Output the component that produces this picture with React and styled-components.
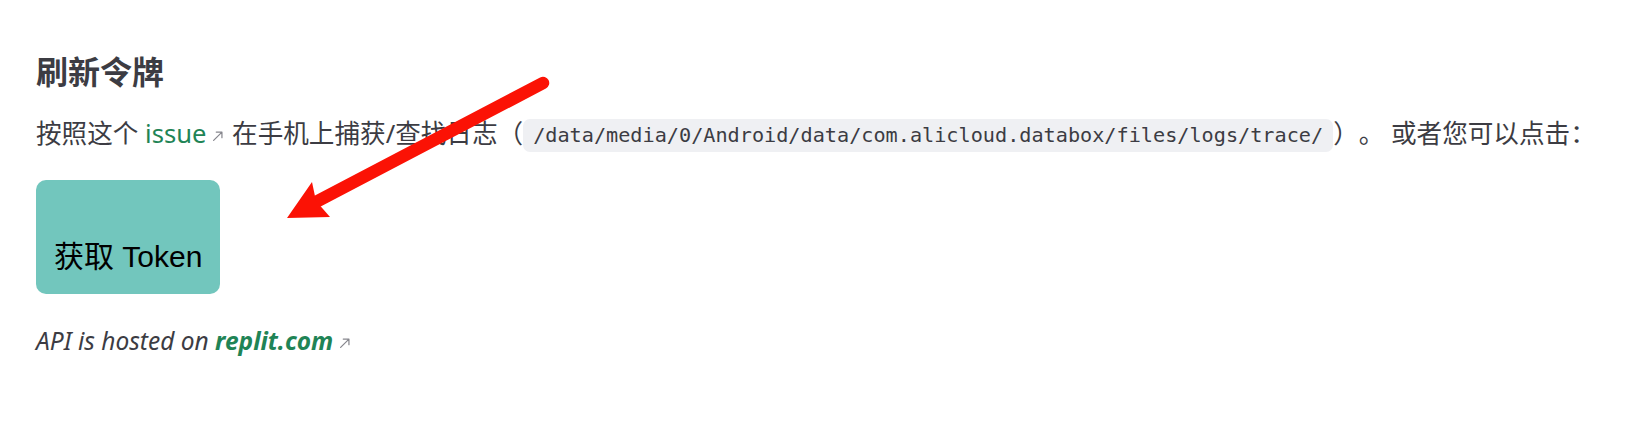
import React from "react";
import styled, { createGlobalStyle } from "styled-components";

const Global = createGlobalStyle`
  html, body {
    margin: 0;
    padding: 0;
    background: #ffffff;
  }
`;

const Page = styled.main`
  position: relative;
  box-sizing: border-box;
  min-height: 426px;
  padding: 52px 36px 0;
  font-family: "Noto Sans", "Noto Sans CJK SC", sans-serif;
  color: #3c3c43;
  text-spacing-trim: space-all;
`;

const Title = styled.h3`
  margin: 0;
  font-size: 32px;
  line-height: 40px;
  font-weight: 700;
  letter-spacing: 0;
`;

const Para = styled.p`
  margin: 20px 0 0;
  font-size: 25.6px;
  line-height: 44px;
  white-space: nowrap;
  text-spacing-trim: space-all;
`;

const InlineCode = styled.code`
  display: inline-block;
  font-family: "DejaVu Sans Mono", "Liberation Mono", monospace;
  font-size: 20.2px;
  line-height: 33px;
  padding: 0 10px;
  border-radius: 7px;
  background: #eff0f3;
  color: #3c3c43;
  vertical-align: 1px;
`;

const ExtLink = styled.a`
  color: #1f8456;
  text-decoration: none;
  font-weight: ${(p) => (p.$strong ? 700 : 400)};
  font-style: ${(p) => (p.$italic ? "italic" : "normal")};
`;

const ExtIcon = styled.svg`
  display: inline-block;
  width: ${(p) => p.$size}px;
  height: ${(p) => p.$size}px;
  margin-left: 5px;
  vertical-align: ${(p) => p.$shift}px;
  color: #86868d;
`;

const TokenButton = styled.button`
  display: flex;
  align-items: flex-end;
  box-sizing: border-box;
  margin-top: 24px;
  height: 114px;
  padding: 0 18px 20px;
  border: none;
  border-radius: 10px;
  background: #72c6bd;
  color: #000000;
  font-family: "Liberation Sans", "Noto Sans CJK SC", sans-serif;
  font-size: 30px;
  line-height: 34px;
  cursor: pointer;
`;

const Footnote = styled.p`
  margin: 29px 0 0;
  font-size: 24.5px;
  line-height: 36px;
  font-style: italic;
  color: #3c3c43;
`;

const Overlay = styled.svg`
  position: absolute;
  left: 0;
  top: 0;
  width: 1626px;
  height: 426px;
  pointer-events: none;
`;

function ArrowUpRight({ size = 16, shift = 0 }) {
  return (
    <ExtIcon $size={size} $shift={shift} viewBox="0 0 16 16" fill="none">
      <path
        d="M3 13 L12.5 3.5 M6 3.5 H12.5 V10"
        stroke="currentColor"
        strokeWidth="1.4"
        strokeLinecap="round"
        strokeLinejoin="round"
      />
    </ExtIcon>
  );
}

export default function App() {
  return (
    <>
      <Global />
      <Page>
        <Title>刷新令牌</Title>
        <Para>
          按照这个{" "}
          <ExtLink href="#">issue</ExtLink>
          <ArrowUpRight size={14} shift={0} /> 在手机上捕获/查找日志（
          <InlineCode>/data/media/0/Android/data/com.alicloud.databox/files/logs/trace/</InlineCode>
          ）。 或者您可以点击：
        </Para>
        <TokenButton type="button">获取 Token</TokenButton>
        <Footnote>
          API is hosted on{" "}
          <ExtLink href="#" $strong $italic>
            replit.com
          </ExtLink>
          <ArrowUpRight size={14} shift={0} />
        </Footnote>
        <Overlay viewBox="0 0 1626 426">
          <line
            x1="543"
            y1="83"
            x2="314"
            y2="203"
            stroke="#fb1205"
            strokeWidth="12.5"
            strokeLinecap="round"
          />
          <polygon points="287,218 312,182 316,201 330,217" fill="#fb1205" />
        </Overlay>
      </Page>
    </>
  );
}
